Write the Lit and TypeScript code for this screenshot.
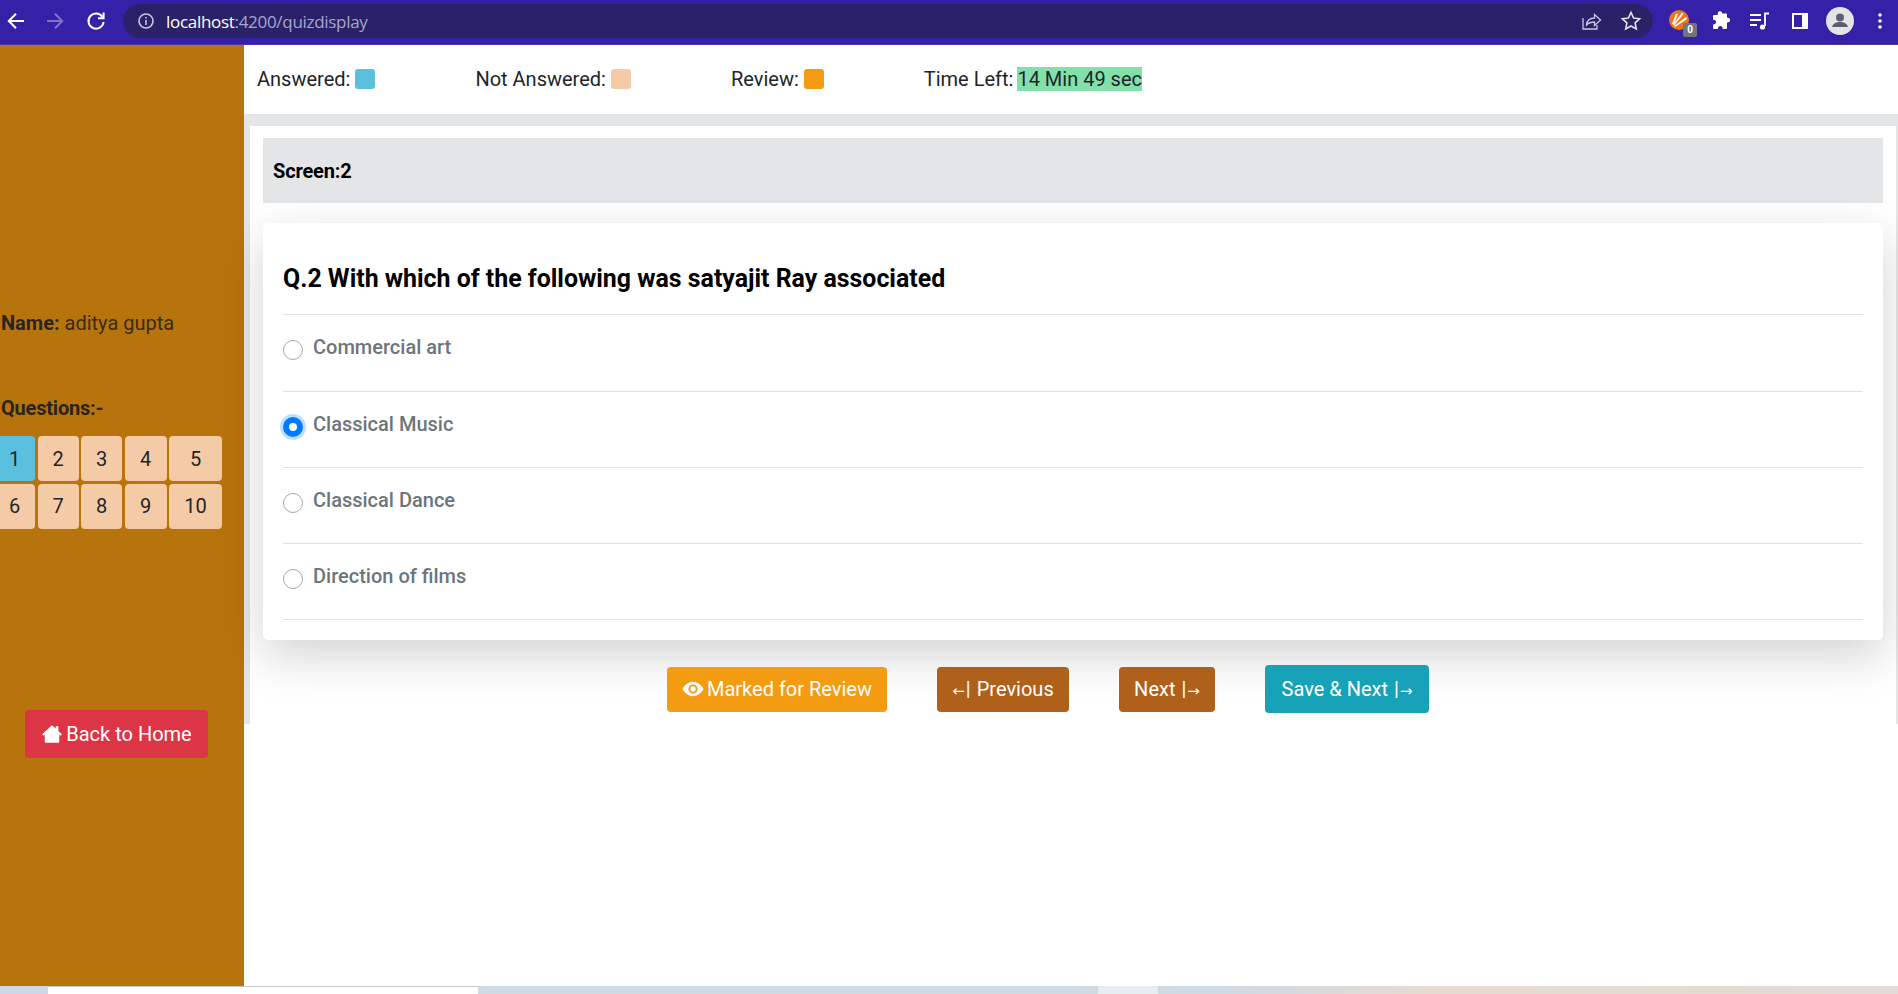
import { LitElement, html, css, svg } from 'lit';
import { customElement, state } from 'lit/decorators.js';

const homeIcon = svg`<path d="M10 2 L1 10.2 L2.2 11.6 L3.4 10.5 L3.4 17 Q3.4 18 4.4 18 L15.6 18 Q16.6 18 16.6 17 L16.6 10.5 L17.8 11.6 L19 10.2 L15.8 7.3 L15.8 3 L13.4 3 L13.4 5.1 Z" fill="currentColor"/>`;
const eyeIcon = svg`<path fill-rule="evenodd" d="M10 3.5 C14.5 3.5 18 7 19.6 10 C18 13 14.5 16.5 10 16.5 C5.5 16.5 2 13 0.4 10 C2 7 5.5 3.5 10 3.5 Z M10 5.8 A4.2 4.2 0 1 0 10 14.2 A4.2 4.2 0 1 0 10 5.8 Z M10 7.6 A2.4 2.4 0 1 1 10 12.4 A2.4 2.4 0 1 1 10 7.6 Z" fill="currentColor"/>`;

@customElement('app-root')
export class AppRoot extends LitElement {
  static override styles = css`
    :host {
      display: flex;
      flex-direction: column;
      height: 994px;
      overflow: hidden;
      font-family: Roboto, "Liberation Sans", sans-serif;
      font-size: 20px;
      color: #212529;
      background: #fff;
    }

    /* browser toolbar */
    .toolbar {
      height: 45px;
      flex: none;
      display: flex;
      align-items: center;
      background: #3520a8;
      box-sizing: border-box;
      border-bottom: 1px solid #4a37a8;
      color: #fff;
    }
    .nav {
      display: flex;
      width: 123px;
      flex: none;
      padding-left: 4px;
      margin-top: -3px;
      box-sizing: border-box;
      gap: 15px;
      align-items: center;
    }
    .nav svg { width: 24px; height: 24px; display: block; }
    .nav svg.reload { margin-left: 2px; }
    .pill {
      flex: none;
      width: 1530px;
      height: 34px;
      margin-top: -2px;
      border-radius: 17px;
      background: #2a2268;
      display: flex;
      align-items: center;
      box-sizing: border-box;
      padding: 0 10px 0 14px;
      font-family: "Open Sans", Roboto, sans-serif;
      font-size: 17px;
      letter-spacing: -0.3px;
    }
    .pill .info { width: 18px; height: 18px; margin-right: 11px; flex: none; }
    .pill .host { color: #fff; }
    .pill .rest { color: #a9a4cf; }
    .pill .end { margin-left: auto; display: flex; gap: 16px; align-items: center; }
    .pill .end svg { width: 24px; height: 24px; display: block; }
    .ext {
      display: flex;
      align-items: center;
      margin-left: 7px;
      margin-top: -3px;
    }
    .ext > div {
      flex: none;
      width: 40px;
      display: flex;
      justify-content: center;
      align-items: center;
    }
    .ext svg { display: block; }
    .ext-badge { position: relative; width: 24px; height: 24px; }
    .ext-badge b {
      position: absolute;
      right: -5px;
      bottom: -4px;
      width: 14px;
      height: 14px;
      border-radius: 2px;
      background: #73737c;
      color: #fff;
      font-size: 10px;
      line-height: 14px;
      text-align: center;
    }

    /* page */
    .page { flex: 1; display: flex; min-height: 0; }
    .sidebar {
      width: 244px;
      flex: none;
      background: #b8740c;
      box-sizing: border-box;
      padding-top: 266px;
      line-height: 24px;
      color: #2a2420;
    }
    .sidebar .name { margin: 0 0 0 1px; font-size: 20px; height: 24px; color: #3b2c12; }
    .sidebar .name strong { font-weight: 700; color: #2a2420; }
    .sidebar .qtitle { font-weight: 700; color: #2a2420; letter-spacing: -0.2px; margin: 61px 0 0 1px; height: 24px; }
    .grid {
      display: grid;
      grid-template-columns: 41px 41px 41px 42px 53px;
      column-gap: 2.5px;
      row-gap: 3px;
      margin: 16px 0 0 -6px;
    }
    .grid button {
      height: 45px;
      padding: 0 0 1px;
      border: none;
      border-radius: 4px;
      background: #f5cba7;
      color: #212529;
      font: 400 20px Roboto, sans-serif;
    }
    .grid button:nth-child(-n+5) { padding: 0; }
    .grid button.done { background: #5bc0de; }
    .home {
      display: flex;
      align-items: center;
      justify-content: center;
      gap: 3px;
      margin: 181px 0 0 25px;
      width: 183px;
      height: 48px;
      padding: 0;
      border: none;
      border-radius: 4px;
      background: #dc3545;
      color: #fff;
      font: 400 20px Roboto, sans-serif;
    }
    .home svg { width: 22px; height: 22px; }

    .main { flex: 1; min-width: 0; display: flex; flex-direction: column; }
    .legend {
      height: 69px;
      flex: none;
      display: flex;
      align-items: center;
      gap: 100px;
      padding: 0 0 2px 13px;
      box-sizing: border-box;
    }
    .legend > div { display: flex; align-items: center; gap: 5px; }
    .swatch { width: 20px; height: 20px; border-radius: 3px; display: block; }
    .swatch.a { background: #5bc0de; }
    .swatch.n { background: #f5cba7; }
    .swatch.r { background: #f39c12; }
    .timer { background: #82e0aa; padding: 0; line-height: 24px; margin-left: -1px; }

    .band {
      height: 610px;
      flex: none;
      background: #e4e5e7;
      box-sizing: border-box;
      padding: 12px 2px 0 6px;
    }
    .panel {
      height: 598px;
      background: #fff;
      box-sizing: border-box;
      padding: 12px 13px 0;
    }
    .screen {
      height: 65px;
      background: #e4e5e7;
      display: flex;
      align-items: center;
      padding-left: 10px;
      font-weight: 700;
      color: #000;
      letter-spacing: -0.15px;
    }
    .card {
      margin-top: 20px;
      height: 417px;
      box-sizing: border-box;
      background: #fff;
      border-radius: 5px;
      padding: 0 20px;
      box-shadow: 0 16px 48px rgba(0, 0, 0, 0.175);
      position: relative;
    }
    .card h2 {
      margin: 0;
      height: 92px;
      box-sizing: border-box;
      padding-top: 41px;
      font-size: 24.9px;
      line-height: 30px;
      font-weight: 700;
      color: #000;
      border-bottom: 1px solid #dee2e6;
    }
    .option {
      height: 76px;
      box-sizing: border-box;
      display: flex;
      align-items: flex-start;
      gap: 10px;
      padding-top: 20px;
      border-bottom: 1px solid #dee2e6;
      color: #6c757d;
      font-weight: 500;
      line-height: 24px;
    }
    .option:nth-of-type(1) { height: 77px; }
    .option input {
      appearance: none;
      -webkit-appearance: none;
      width: 20px;
      height: 20px;
      margin: 5px 0 0;
      flex: none;
      border: 1px solid #a8a8a8;
      border-radius: 50%;
      background: #fff;
      box-sizing: border-box;
    }
    .option input:checked {
      border: 6px solid #007bff;
      box-shadow: 0 0 0 3px rgba(0, 123, 255, 0.25);
    }
    .actions {
      display: flex;
      align-items: center;
      gap: 50px;
      margin-top: 25px;
      padding-left: 404px;
      position: relative;
    }
    .actions button {
      height: 45px;
      padding: 0;
      border: none;
      border-radius: 4px;
      color: #fff;
      font: 400 20px Roboto, "DejaVu Sans", sans-serif;
      display: flex;
      align-items: center;
      justify-content: center;
      gap: 3px;
    }
    .actions svg { width: 22px; height: 22px; }
    .arrow { font-size: 15px; }
    .bar { margin: 0 1px; }
    .review { width: 220px; background: #f39c12; }
    .prev { width: 132px; background: #af601a; }
    .next { width: 96px; background: #af601a; }
    .save { width: 164px; height: 48px !important; background: #17a2b8; }

    /* desktop peeking out under the window */
    .strip {
      height: 8px;
      flex: none;
      display: flex;
      background: linear-gradient(90deg, #cfd9e2 0%, #cfd9e2 65%, #e6dbd0 75%, #e2dcd4 100%);
    }
    .strip .light { width: 48px; background: #cdd7e8; }
    .strip .tab { width: 430px; background: #fff; border-top: 1px solid #c9c9c9; box-sizing: border-box; }
    .strip .gap { width: 620px; }
    .strip .pale { width: 60px; background: #e6edf1; }
  `;

  @state()
  private selected = 1;

  private options = ['Commercial art', 'Classical Music', 'Classical Dance', 'Direction of films'];

  private toolbar() {
    return html`
      <div class="toolbar">
        <div class="nav">
          <svg viewBox="0 0 24 24" fill="none" stroke="#fff" stroke-width="2"><path d="M20 12H5M12 4.8 4.8 12l7.2 7.2"/></svg>
          <svg viewBox="0 0 24 24" fill="none" stroke="#7f72c8" stroke-width="2"><path d="M4 12h15M12 4.8l7.2 7.2-7.2 7.2"/></svg>
          <svg class="reload" viewBox="0 0 24 24" fill="none" stroke="#fff" stroke-width="2"><path d="M18.6 8.2A7.6 7.6 0 1 0 19.6 13"/><path d="M19.6 3.6v5.6H14" /></svg>
        </div>
        <div class="pill">
          <svg class="info" viewBox="0 0 18 18" fill="none" stroke="#c9c6e0" stroke-width="1.6"><circle cx="9" cy="9" r="7"/><path d="M9 8v5M9 5v1.6"/></svg>
          <span><span class="host">localhost</span><span class="rest">:4200/quizdisplay</span></span>
          <div class="end">
            <svg viewBox="0 0 24 24" fill="none" stroke="#c9c6e0" stroke-width="1.3"><path d="M4 9v11h14v-4"/><path d="M7.5 16c.5-4.5 3.5-7 8-7V5.5l6 5.5-6 5.5V13c-3.5 0-6 1-8 3z"/></svg>
            <svg viewBox="0 0 24 24" fill="none" stroke="#e4e2f2" stroke-width="1.6"><path d="M12 3.5l2.6 5.6 6 .7-4.5 4.1 1.2 6L12 17l-5.3 2.9 1.2-6-4.5-4.1 6-.7z"/></svg>
          </div>
        </div>
        <div class="ext">
          <div>
            <div class="ext-badge">
              <svg width="24" height="24" viewBox="0 0 24 24"><circle cx="11" cy="11" r="10" fill="#f0741c"/><path d="M4 15 8 4.5 10 5 6 15.5ZM5 16 14 3.5 15.5 5 6 16.5ZM6 17 18 8 19 10 7 18Z" fill="#fff"/></svg>
              <b>0</b>
            </div>
          </div>
          <div><svg width="20" height="20" viewBox="0 0 20 20"><path fill="#fff" d="M8 1.5a2.2 2.2 0 0 1 4.2 1H16a1 1 0 0 1 1 1v3.3a2.4 2.4 0 1 1 0 4.6V17a1 1 0 0 1-1 1h-3.4a2.4 2.4 0 1 0-4.6 0H4a1 1 0 0 1-1-1v-3.6a2.4 2.4 0 1 0 0-4.6V5a1 1 0 0 1 1-1h3.6c.2-.9.2-1.7.4-2.5z"/></svg></div>
          <div><svg width="22" height="22" viewBox="0 0 22 22" fill="none" stroke="#fff" stroke-width="1.8"><path d="M1 5h11M1 10h11M1 15h7"/><path d="M16 16V3.5h4"/><circle cx="13.5" cy="17" r="2.6" fill="#fff" stroke="none"/></svg></div>
          <div><svg width="20" height="20" viewBox="0 0 20 20"><rect x="2" y="2" width="16" height="16" fill="#fff"/><rect x="4" y="4" width="8" height="12" fill="#3520a8"/></svg></div>
          <div><svg width="28" height="28" viewBox="0 0 28 28"><circle cx="14" cy="14" r="14" fill="#e3e3e8"/><circle cx="14" cy="10.5" r="4" fill="#5b6070"/><path d="M6 20c1-4 5-5 8-5s7 1 8 5z" fill="#5b6070"/></svg></div>
          <div><svg width="4" height="16" viewBox="0 0 4 16"><circle cx="2" cy="2" r="1.8" fill="#fff"/><circle cx="2" cy="8" r="1.8" fill="#fff"/><circle cx="2" cy="14" r="1.8" fill="#fff"/></svg></div>
        </div>
      </div>
    `;
  }

  override render() {
    return html`
      ${this.toolbar()}
      <div class="page">
        <aside class="sidebar">
          <p class="name"><strong>Name:</strong> aditya gupta</p>
          <p class="qtitle">Questions:-</p>
          <div class="grid">
            ${[1, 2, 3, 4, 5, 6, 7, 8, 9, 10].map(n => html`<button class=${n === 1 ? 'done' : ''}>${n}</button>`)}
          </div>
          <button class="home"><svg viewBox="0 0 20 20">${homeIcon}</svg>Back to Home</button>
        </aside>
        <main class="main">
          <div class="legend">
            <div>Answered: <span class="swatch a"></span></div>
            <div>Not Answered: <span class="swatch n"></span></div>
            <div>Review: <span class="swatch r"></span></div>
            <div>Time Left: <span class="timer">14 Min 49 sec</span></div>
          </div>
          <div class="band">
            <div class="panel">
              <div class="screen">Screen:2</div>
              <div class="card">
                <h2>Q.2 With which of the following was satyajit Ray associated</h2>
                ${this.options.map((opt, i) => html`
                  <label class="option">
                    <input type="radio" name="answer" .checked=${i === this.selected} @change=${() => { this.selected = i; }} />
                    <span>${opt}</span>
                  </label>
                `)}
              </div>
              <div class="actions">
                <button class="review"><svg viewBox="0 0 20 20">${eyeIcon}</svg>Marked for Review</button>
                <button class="prev"><span><span class="arrow">←</span><span class="bar">|</span> Previous</span></button>
                <button class="next"><span>Next <span class="bar">|</span><span class="arrow">→</span></span></button>
                <button class="save"><span>Save &amp; Next <span class="bar">|</span><span class="arrow">→</span></span></button>
              </div>
            </div>
          </div>
        </main>
      </div>
      <div class="strip">
        <div class="light"></div>
        <div class="tab"></div>
        <div class="gap"></div>
        <div class="pale"></div>
      </div>
    `;
  }
}
